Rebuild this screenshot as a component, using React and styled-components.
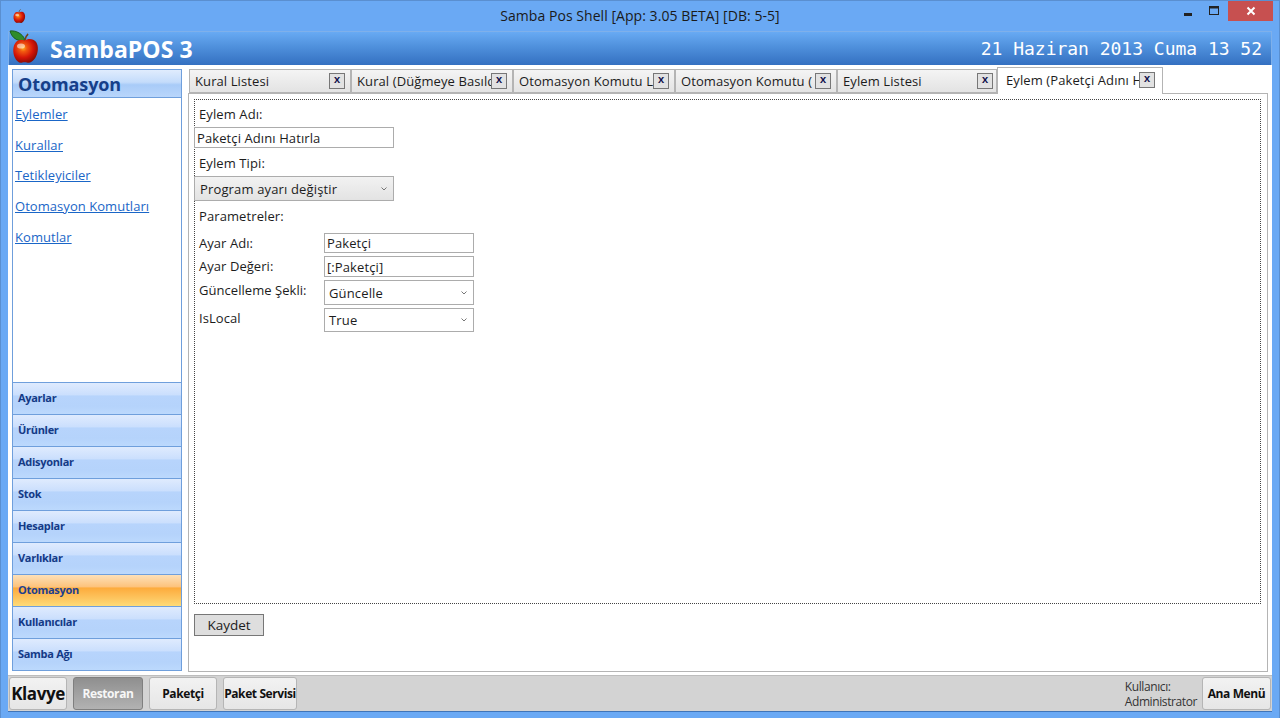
import React from 'react';
import styled, { createGlobalStyle } from 'styled-components';

const GlobalStyle = createGlobalStyle`
  html, body { margin: 0; padding: 0; background: #6aa9f4; overflow: hidden; }
  * { box-sizing: border-box; }
  body { font-family: "Open Sans", "Noto Sans", "Liberation Sans", sans-serif; color: #1c1c1c; }
`;

const Window = styled.div`
  width: 1280px;
  height: 718px;
  display: flex;
  flex-direction: column;
  background: #6aa9f4;
  border: 1px solid #5a8fd0;
  border-bottom: 0;
`;

const TitleBar = styled.div`
  height: 30px;
  flex: none;
  display: flex;
  align-items: flex-start;
  padding-left: 10px;
  position: relative;
`;

const TitleText = styled.div`
  position: absolute;
  left: 0;
  right: 0;
  top: 5px;
  text-align: center;
  font-size: 14px;
  line-height: 19px;
  letter-spacing: 0.05px;
  color: #1a1a1a;
`;

const TitleIcon = styled.div`
  margin-top: 6px;
  width: 17px;
  height: 17px;
`;

const WindowControls = styled.div`
  margin-left: auto;
  margin-right: 6px;
  display: flex;
  align-items: flex-start;
  position: relative;
`;

const ControlButton = styled.div`
  width: ${(props) => props.$width}px;
  height: 20px;
  display: flex;
  align-items: center;
  justify-content: center;
  background: ${(props) => (props.$close ? '#c75050' : 'transparent')};
`;

const Shell = styled.div`
  flex: 1;
  margin: 0 7px 7px;
  display: flex;
  flex-direction: column;
  min-height: 0;
  box-shadow: 0 1px 0 #3f74b8;
`;

const Header = styled.div`
  height: 34px;
  flex: none;
  display: flex;
  align-items: center;
  padding: 0 9px 0 0;
  background: linear-gradient(#68aaf3 0%, #4f90dc 45%, #3470c1 100%);
  border: 1px solid #7fb0ea;
  border-bottom: 0;
  position: relative;
`;

const Logo = styled.div`
  width: 34px;
  height: 36px;
  margin-top: -3px;
  flex: none;
`;

const Brand = styled.div`
  margin-left: 7px;
  font-size: 23px;
  font-weight: 700;
  color: #fff;
  letter-spacing: 0.05px;
`;

const Clock = styled.div`
  margin-left: auto;
  font-family: "DejaVu Sans Mono", "Liberation Mono", monospace;
  font-size: 18px;
  letter-spacing: -0.02px;
  color: #fff;
`;

const Body = styled.div`
  flex: 1;
  min-height: 0;
  display: flex;
  gap: 6px;
  background: #fff;
  padding: 3px 4px 3px 4px;
`;

const Sidebar = styled.div`
  width: 170px;
  flex: none;
  display: flex;
  flex-direction: column;
  border: 1px solid #6f9fdc;
  background: #fff;
  margin-top: 1px;
  margin-bottom: 1px;
`;

const SideTitle = styled.div`
  height: 28px;
  flex: none;
  padding-left: 5px;
  font-size: 18px;
  line-height: 28px;
  font-weight: 700;
  color: #163f8a;
  letter-spacing: -0.1px;
  background: linear-gradient(#e0ecfd 0%, #c4dcfb 45%, #a8cbf8 55%, #b9d6fb 100%);
  border-bottom: 1px solid #6f9fdc;
`;

const SideLinks = styled.div`
  flex: 1;
  display: flex;
  flex-direction: column;
  gap: 11.7px;
  padding: 7px 0 0 2px;
`;

const SideLink = styled.a`
  font-size: 13px;
  line-height: 19px;
  letter-spacing: 0.05px;
  color: #1a66c7;
  text-decoration: underline;
`;

const SectionButton = styled.div`
  height: 32px;
  flex: none;
  padding: 0 0 2px 5px;
  display: flex;
  align-items: center;
  font-size: 11px;
  font-weight: 700;
  letter-spacing: -0.3px;
  color: ${(props) => (props.$active ? '#1d3f8e' : '#143a86')};
  border-top: 1px solid #6f9fdc;
  background: ${(props) => (props.$active
    ? 'linear-gradient(#fde0b8 0%, #fdc37c 38%, #fdab3c 42%, #fdc55f 75%, #fedb78 100%)'
    : 'linear-gradient(#dfebfe 0%, #cbdffd 38%, #b7d4fc 42%, #b5d3fb 75%, #bcd9fd 100%)')};
`;

const Content = styled.div`
  flex: 1;
  min-width: 0;
  display: flex;
  flex-direction: column;
`;

const TabStrip = styled.div`
  height: 25px;
  flex: none;
  display: flex;
  align-items: flex-end;
  padding-left: 1px;
  position: relative;
  z-index: 1;
`;

const Tab = styled.div`
  width: ${(props) => props.$width}px;
  height: ${(props) => (props.$active ? 27 : 24)}px;
  margin-bottom: ${(props) => (props.$active ? -1 : 0)}px;
  flex: none;
  display: flex;
  align-items: center;
  padding: ${(props) => (props.$active ? '0 7px 2px 8px' : `0 ${props.$pad}px 0 5px`)};
  font-size: 13px;
  letter-spacing: 0.1px;
  border: 1px solid #b4b4b4;
  border-bottom: ${(props) => (props.$active ? '0' : '1px solid #b4b4b4')};
  background: ${(props) => (props.$active ? '#fff' : 'linear-gradient(#f4f4f4, #e3e3e3)')};
`;

const TabLabel = styled.span`
  flex: 1;
  min-width: 0;
  overflow: hidden;
  white-space: nowrap;
`;

const TabClose = styled.span`
  width: 16px;
  height: 16px;
  flex: none;
  display: flex;
  align-items: center;
  justify-content: center;
  border: 1px solid #777;
  background: #e2e2e2;
  font-family: "Liberation Mono", monospace;
  font-size: 11px;
  font-weight: 700;
  letter-spacing: 0;
  color: #10104a;
  padding-bottom: 2px;
`;

const Panel = styled.div`
  flex: 1;
  min-height: 0;
  border: 1px solid #b4b4b4;
  padding: 5px 6px 35px 5px;
  display: flex;
  flex-direction: column;
  background: #fff;
`;

const DottedFrame = styled.div`
  height: 505px;
  flex: none;
  border: 1px dotted #444;
  display: flex;
  flex-direction: column;
  align-items: flex-start;
  padding: 5px 0 0 0;
`;

const Label = styled.div`
  height: 18px;
  padding-left: 4px;
  font-size: 13px;
  line-height: 18px;
  letter-spacing: 0.1px;
  margin-top: ${(props) => props.$top || 0}px;
`;

const TextBox = styled.div`
  width: ${(props) => props.$width}px;
  height: ${(props) => props.$height}px;
  border: 1px solid #acacac;
  background: #fff;
  display: flex;
  align-items: center;
  padding-left: 2px;
  font-size: 13px;
  letter-spacing: 0.1px;
  margin-top: ${(props) => props.$top || 0}px;
  margin-left: ${(props) => props.$left || 0}px;
`;

const SelectBox = styled.div`
  width: ${(props) => props.$width}px;
  height: ${(props) => props.$height}px;
  border: 1px solid #acacac;
  background: ${(props) => (props.$flat ? '#fff' : 'linear-gradient(#f2f2f2, #e3e3e3)')};
  display: flex;
  align-items: center;
  justify-content: space-between;
  padding: 0 6px 0 ${(props) => (props.$flat ? 4 : 5)}px;
  font-size: 13px;
  letter-spacing: 0.15px;
  margin-top: ${(props) => props.$top || 0}px;
  margin-left: ${(props) => props.$left || 0}px;
`;

const ParamGrid = styled.div`
  display: grid;
  grid-template-columns: 129px 150px;
  margin-top: 8px;
`;

const ParamRow = styled.div`
  display: contents;
`;

const ParamLabel = styled.div`
  padding-left: 4px;
  font-size: 13px;
  line-height: 18px;
  letter-spacing: 0.05px;
  margin-top: 1px;
`;

const ParamCell = styled.div`
  margin-bottom: ${(props) => props.$gap}px;
`;

const SaveButton = styled.div`
  width: 70px;
  height: 22px;
  margin-top: 10px;
  border: 1px solid #777;
  background: #dedede;
  display: flex;
  align-items: center;
  justify-content: center;
  font-size: 13.5px;
  flex: none;
`;

const BottomBar = styled.div`
  height: 36px;
  flex: none;
  display: flex;
  align-items: center;
  gap: 6px;
  padding: 0 1px 0 1px;
  background: #d3d3d3;
  border-top: 1px solid #bdbdbd;
`;

const BarButton = styled.div`
  width: ${(props) => props.$width}px;
  height: 33px;
  flex: none;
  display: flex;
  align-items: center;
  justify-content: center;
  border-radius: 3px;
  border: 1px solid ${(props) => (props.$active ? '#7f7f7f' : '#b5b5b5')};
  background: ${(props) => (props.$active
    ? 'linear-gradient(#8f8f8f, #b2b2b2)'
    : 'linear-gradient(#f2f2f2, #e6e6e6)')};
  color: ${(props) => (props.$active ? '#f7f7f7' : '#111')};
  font-size: ${(props) => props.$size || 12}px;
  font-weight: 700;
  letter-spacing: -0.4px;
  white-space: nowrap;
`;

const UserInfo = styled.div`
  margin-left: auto;
  margin-right: -1px;
  font-size: 12px;
  line-height: 15px;
  letter-spacing: -0.4px;
  color: #333;
`;

const UserLine = styled.div``;

const Apple = ({ id, leaf }) => (
  <svg width="100%" height="100%" viewBox="0 0 34 36">
    <defs>
      <radialGradient id={id} cx="40%" cy="38%" r="68%">
        <stop offset="0%" stopColor="#ffb020" />
        <stop offset="22%" stopColor="#f25a10" />
        <stop offset="60%" stopColor="#d41408" />
        <stop offset="100%" stopColor="#7c0a04" />
      </radialGradient>
    </defs>
    {leaf && <path d="M1 2 C7 1 14 5 16 11 C10 13 3 10 1 2 Z" fill="#2f8c2c" stroke="#14501a" strokeWidth="0.8" />}
    <g transform="translate(0.44 0) scale(0.89 1)">
      <path d="M17 12 C17.5 9 19 6.5 21 5" stroke="#6e4318" strokeWidth="1.6" fill="none" />
      <path d="M17 11.5 C21 9 27 9.5 30 13 C33 17 32.5 24 29 29 C26 33 22.5 34.5 19.5 33.5 C18 33 16 33 14.5 33.5 C11.5 34.5 8 32.5 6 28.5 C3.5 23.5 3.8 17 7 13.5 C9.5 10.5 14 10 17 11.5 Z" fill={`url(#${id})`} />
      <ellipse cx="13" cy="17" rx="4.5" ry="2.6" fill="#fff" opacity="0.55" />
    </g>
  </svg>
);

const Chevron = () => (
  <svg width="6" height="4" viewBox="0 0 6 4">
    <path d="M0.5 0.5 L3 3 L5.5 0.5" fill="none" stroke="#777" strokeWidth="1" />
  </svg>
);

const tabs = [
  { text: 'Kural Listesi', width: 162, pad: 5 },
  { text: 'Kural (Düğmeye Basıld', width: 162, pad: 5 },
  { text: 'Otomasyon Komutu L', width: 162, pad: 5 },
  { text: 'Otomasyon Komutu (', width: 162, pad: 5 },
  { text: 'Eylem Listesi', width: 160, pad: 3 },
  { text: 'Eylem (Paketçi Adını H', width: 166, active: true },
];

const links = ['Eylemler', 'Kurallar', 'Tetikleyiciler', 'Otomasyon Komutları', 'Komutlar'];
const sections = ['Ayarlar', 'Ürünler', 'Adisyonlar', 'Stok', 'Hesaplar', 'Varlıklar', 'Otomasyon', 'Kullanıcılar', 'Samba Ağı'];

const App = () => (
  <Window>
    <GlobalStyle />
    <TitleBar>
      <TitleIcon><Apple id="apple-small" /></TitleIcon>
      <TitleText>Samba Pos Shell [App: 3.05 BETA] [DB: 5-5]</TitleText>
      <WindowControls>
        <ControlButton $width={26}>
          <svg width="10" height="10" viewBox="0 0 10 10"><rect x="1" y="7" width="8" height="3" fill="#222" /></svg>
        </ControlButton>
        <ControlButton $width={27}>
          <svg width="11" height="10" viewBox="0 0 11 10"><rect x="0.5" y="0.5" width="9" height="8" fill="none" stroke="#222" /><rect x="0" y="0" width="10" height="2.5" fill="#222" /></svg>
        </ControlButton>
        <ControlButton $width={45} $close>
          <svg width="10" height="10" viewBox="0 0 10 10"><path d="M1.5 1.5 L8.5 8.5 M8.5 1.5 L1.5 8.5" stroke="#fff" strokeWidth="2" /></svg>
        </ControlButton>
      </WindowControls>
    </TitleBar>
    <Shell>
      <Header>
        <Logo><Apple id="apple-big" leaf /></Logo>
        <Brand>SambaPOS 3</Brand>
        <Clock>21 Haziran 2013 Cuma 13 52</Clock>
      </Header>
      <Body>
        <Sidebar>
          <SideTitle>Otomasyon</SideTitle>
          <SideLinks>
            {links.map((link) => <SideLink key={link}>{link}</SideLink>)}
          </SideLinks>
          {sections.map((section) => (
            <SectionButton key={section} $active={section === 'Otomasyon'}>{section}</SectionButton>
          ))}
        </Sidebar>
        <Content>
          <TabStrip>
            {tabs.map((tab) => (
              <Tab key={tab.text} $width={tab.width} $pad={tab.pad} $active={tab.active}>
                <TabLabel>{tab.text}</TabLabel>
                <TabClose>x</TabClose>
              </Tab>
            ))}
          </TabStrip>
          <Panel>
            <DottedFrame>
              <Label>Eylem Adı:</Label>
              <TextBox $width={200} $height={21} $top={4} $left={-1}>Paketçi Adını Hatırla</TextBox>
              <Label $top={6}>Eylem Tipi:</Label>
              <SelectBox $width={200} $height={25} $top={4} $left={-1}>Program ayarı değiştir<Chevron /></SelectBox>
              <Label $top={6}>Parametreler:</Label>
              <ParamGrid>
                <ParamRow>
                  <ParamLabel>Ayar Adı:</ParamLabel>
                  <ParamCell $gap={3}><TextBox $width={150} $height={20}>Paketçi</TextBox></ParamCell>
                </ParamRow>
                <ParamRow>
                  <ParamLabel>Ayar Değeri:</ParamLabel>
                  <ParamCell $gap={3}><TextBox $width={150} $height={21}>[:Paketçi]</TextBox></ParamCell>
                </ParamRow>
                <ParamRow>
                  <ParamLabel>Güncelleme Şekli:</ParamLabel>
                  <ParamCell $gap={3}><SelectBox $flat $width={150} $height={25}>Güncelle<Chevron /></SelectBox></ParamCell>
                </ParamRow>
                <ParamRow>
                  <ParamLabel>IsLocal</ParamLabel>
                  <ParamCell $gap={0}><SelectBox $flat $width={150} $height={24}>True<Chevron /></SelectBox></ParamCell>
                </ParamRow>
              </ParamGrid>
            </DottedFrame>
            <SaveButton>Kaydet</SaveButton>
          </Panel>
        </Content>
      </Body>
      <BottomBar>
        <BarButton $width={58} $size={17}>Klavye</BarButton>
        <BarButton $width={70} $active>Restoran</BarButton>
        <BarButton $width={68}>Paketçi</BarButton>
        <BarButton $width={74}>Paket Servisi</BarButton>
        <UserInfo>
          <UserLine>Kullanıcı:</UserLine>
          <UserLine>Administrator</UserLine>
        </UserInfo>
        <BarButton $width={69}>Ana Menü</BarButton>
      </BottomBar>
    </Shell>
  </Window>
);

export default App;
